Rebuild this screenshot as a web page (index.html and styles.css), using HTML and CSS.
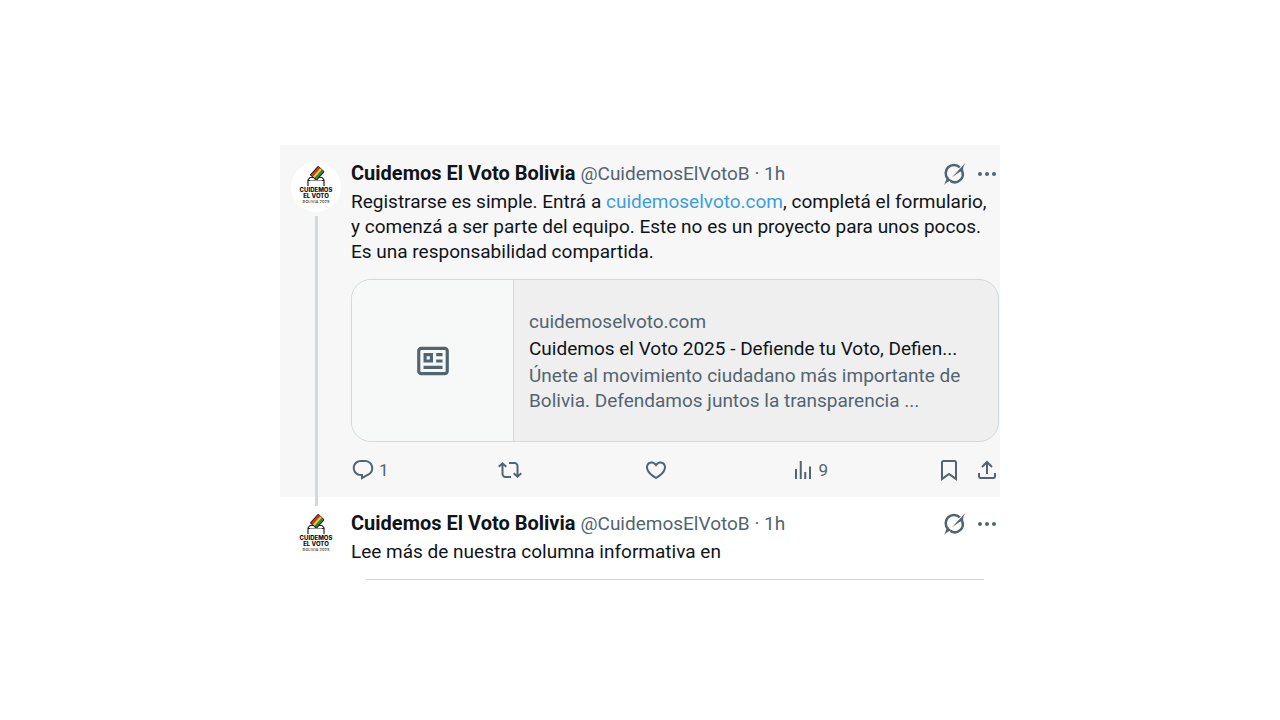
FILE: index.html
```html
<!DOCTYPE html>
<html lang="es">

<head>
    <meta charset="UTF-8">
    <meta name="viewport" content="width=device-width, initial-scale=1.0">
    <title>Cuidemos El Voto Bolivia</title>
    <link rel="stylesheet" href="styles.css">
</head>

<body>

    <!-- shared icons -->
    <svg class="sprite" aria-hidden="true">
        <symbol id="logo" viewBox="0 0 50 50">
            <circle cx="25" cy="25" r="25" fill="#fff"/>
            <path d="M17 24V18L19 15.500H31L33 18V24M17 18.500H33" fill="none" stroke="#222" stroke-width="1.200"/>
            <g transform="rotate(-48 26 11.500)">
                <rect x="20" y="7" width="12.500" height="9" rx="1" fill="#1d1d1b"/>
                <rect x="21" y="8" width="11" height="2.400" fill="#d8352a"/>
                <rect x="21" y="10.400" width="11" height="2.400" fill="#f5c928"/>
                <rect x="21" y="12.800" width="11" height="2.200" fill="#31863c"/>
            </g>
            <path d="M19 19H31" stroke="#fff" stroke-width="1"/>
        </symbol>
        <symbol id="grok" viewBox="0 0 24 24">
            <path d="M5 16.900A8 8 0 0 1 16.800 5.400M18.900 8.600A8 8 0 0 1 7.400 18.900" fill="none" stroke="currentColor" stroke-width="2.500"/>
            <path d="M22.500 .8L9 15.200L16.600 9.900L20.200 8.600C19.600 5.600 21 3.600 22.500 .8zM1.200 22.900L4.200 14.900L9.200 18.700C5.700 18.600 3.500 20.600 1.200 22.900z"/>
        </symbol>
        <symbol id="more" viewBox="0 0 24 24">
            <path d="M3 12c0-1.100.9-2 2-2s2 .9 2 2-.9 2-2 2-2-.9-2-2zm9 2c1.100 0 2-.9 2-2s-.9-2-2-2-2 .9-2 2 .9 2 2 2zm7 0c1.100 0 2-.9 2-2s-.9-2-2-2-2 .9-2 2 .9 2 2 2z"/>
        </symbol>
        <symbol id="news" viewBox="0 0 24 24">
            <path d="M1.998 5.500c0-1.380 1.119-2.500 2.500-2.500h15c1.381 0 2.500 1.120 2.500 2.500v13c0 1.380-1.119 2.500-2.500 2.500h-15c-1.381 0-2.500-1.120-2.500-2.500v-13zm2.500-.5c-.276 0-.5.22-.5.5v13c0 .28.224.5.5.5h15c.276 0 .5-.22.5-.5v-13c0-.28-.224-.5-.5-.5h-15zM6 7h6v6H6V7zm2 2v2h2V9H8zm10 0h-4V7h4v2zm-4 4h4v-2h-4v2zm-8 4v-2h12v2H6z"/>
        </symbol>
        <symbol id="reply" viewBox="0 0 24 24">
            <path d="M1.751 10c0-4.420 3.584-8 8.005-8h4.366c4.490 0 8.129 3.640 8.129 8.130 0 2.960-1.607 5.680-4.196 7.110l-8.054 4.460v-3.690h-.067c-4.490.1-8.183-3.510-8.183-8.010zm8.005-6c-3.317 0-6.005 2.690-6.005 6 0 3.370 2.770 6.080 6.138 6.010l.351-.01h1.761v2.300l5.087-2.810c1.951-1.080 3.163-3.130 3.163-5.360 0-3.390-2.744-6.130-6.129-6.130H9.756z"/>
        </symbol>
        <symbol id="repost" viewBox="0 0 24 24">
            <path d="M4.500 3.880l4.432 4.140-1.364 1.460L5.500 7.550V16c0 1.100.896 2 2 2H13v2H7.500c-2.209 0-4-1.790-4-4V7.550L1.432 9.480.068 8.020 4.500 3.880zM16.500 6H11V4h5.500c2.209 0 4 1.790 4 4v8.450l2.068-1.930 1.364 1.460-4.432 4.140-4.432-4.140 1.364-1.460 2.068 1.930V8c0-1.100-.896-2-2-2z"/>
        </symbol>
        <symbol id="like" viewBox="0 0 24 24">
            <path d="M16.697 5.500c-1.222-.06-2.679.51-3.890 2.160l-.805 1.090-.806-1.090C9.984 6.010 8.526 5.440 7.304 5.500c-1.243.07-2.349.78-2.910 1.910-.552 1.120-.633 2.780.479 4.820 1.074 1.970 3.257 4.270 7.129 6.610 3.870-2.340 6.052-4.640 7.126-6.610 1.111-2.040 1.030-3.700.477-4.820-.561-1.130-1.666-1.840-2.908-1.910zm4.187 7.690c-1.351 2.480-4.001 5.120-8.379 7.670l-.503.3-.504-.3c-4.379-2.550-7.029-5.190-8.382-7.670-1.360-2.500-1.410-4.860-.514-6.670.887-1.790 2.647-2.910 4.601-3.010 1.651-.09 3.368.56 4.798 2.010 1.429-1.450 3.146-2.100 4.796-2.010 1.954.1 3.714 1.220 4.601 3.010.896 1.810.846 4.170-.514 6.670z"/>
        </symbol>
        <symbol id="views" viewBox="0 0 24 24">
            <path d="M8.750 21V3h2v18h-2zM18 21V8.500h2V21h-2zM4 21l.004-10h2L6 21H4zm9.248 0v-7h2v7h-2z"/>
        </symbol>
        <symbol id="bookmark" viewBox="0 0 24 24">
            <path d="M4 4.500C4 3.120 5.119 2 6.500 2h11C18.881 2 20 3.120 20 4.500v18.440l-8-5.710-8 5.710V4.500zM6.500 4c-.276 0-.5.22-.5.5v14.560l6-4.290 6 4.290V4.500c0-.28-.224-.5-.5-.5h-11z"/>
        </symbol>
        <symbol id="share" viewBox="0 0 24 24">
            <path d="M12 2.590l5.700 5.700-1.410 1.420L13 6.410V16h-2V6.410l-3.300 3.300-1.410-1.420L12 2.590zM21 15l-.02 3.510c0 1.380-1.120 2.490-2.500 2.490H5.500C4.110 21 3 19.880 3 18.500V15h2v3.500c0 .28.22.5.5.5h12.980c.28 0 .5-.22.5-.5L19 15h2z"/>
        </symbol>
    </svg>

    <main class="thread">
        <article class="post active">
            <div class="side">
                <svg class="avatar" viewBox="0 0 50 50">
                    <use href="#logo"/>
                    <text class="logo-text" x="25" y="30">CUIDEMOS</text>
                    <text class="logo-text" x="25" y="36">EL VOTO</text>
                    <text class="logo-small" x="25" y="41">BOLIVIA 2025</text>
                </svg>
                <div class="line"></div>
            </div>
            <div class="content">
                <header class="post-header">
                    <strong class="name">Cuidemos El Voto Bolivia</strong>
                    <span class="handle">@CuidemosElVotoB · 1h</span>
                    <div class="tools">
                        <button aria-label="Grok"><svg class="icon"><use href="#grok"/></svg></button>
                        <button aria-label="Más opciones"><svg class="icon"><use href="#more"/></svg></button>
                    </div>
                </header>
                <p class="text">Registrarse es simple. Entrá a <a href="#">cuidemoselvoto.com</a>, completá el formulario, y comenzá a ser parte del equipo. Este no es un proyecto para unos pocos. Es una responsabilidad compartida.</p>
                <a class="card" href="#">
                    <div class="card-media"><svg class="news"><use href="#news"/></svg></div>
                    <div class="card-body">
                        <div class="card-domain">cuidemoselvoto.com</div>
                        <div class="card-title">Cuidemos el Voto 2025 - Defiende tu Voto, Defien...</div>
                        <div class="card-desc">Únete al movimiento ciudadano más importante de Bolivia. Defendamos juntos la transparencia ...</div>
                    </div>
                </a>
                <div class="actions">
                    <button aria-label="Responder"><svg class="icon"><use href="#reply"/></svg><span>1</span></button>
                    <button aria-label="Repostear"><svg class="icon"><use href="#repost"/></svg></button>
                    <button aria-label="Me gusta"><svg class="icon"><use href="#like"/></svg></button>
                    <button aria-label="Vistas"><svg class="icon"><use href="#views"/></svg><span>9</span></button>
                    <div class="save">
                        <button aria-label="Guardar"><svg class="icon"><use href="#bookmark"/></svg></button>
                        <button aria-label="Compartir"><svg class="icon"><use href="#share"/></svg></button>
                    </div>
                </div>
            </div>
        </article>

        <article class="post last">
            <div class="side">
                <div class="line-end"></div>
                <svg class="avatar" viewBox="0 0 50 50">
                    <use href="#logo"/>
                    <text class="logo-text" x="25" y="30">CUIDEMOS</text>
                    <text class="logo-text" x="25" y="36">EL VOTO</text>
                    <text class="logo-small" x="25" y="41">BOLIVIA 2025</text>
                </svg>
            </div>
            <div class="content">
                <header class="post-header">
                    <strong class="name">Cuidemos El Voto Bolivia</strong>
                    <span class="handle">@CuidemosElVotoB · 1h</span>
                    <div class="tools">
                        <button aria-label="Grok"><svg class="icon"><use href="#grok"/></svg></button>
                        <button aria-label="Más opciones"><svg class="icon"><use href="#more"/></svg></button>
                    </div>
                </header>
                <p class="text">Lee más de nuestra columna informativa en</p>
                <div class="divider"></div>
            </div>
        </article>
    </main>

</body>

</html>
```
FILE: styles.css
```css
* {
    box-sizing: border-box;
}

body {
    margin: 0;
    padding-top: 145px;
    font-family: Roboto, "Liberation Sans", sans-serif;
    font-size: 19px;
    line-height: 25px;
    color: #0f1419;
    background-color: #fff;
}

.sprite {
    display: block;
    width: 0;
    height: 0;
}

.logo-text {
    font-family: Inter, sans-serif;
    font-size: 6px;
    font-weight: 800;
    text-anchor: middle;
    fill: #111;
}

.logo-small {
    font-family: Inter, sans-serif;
    font-size: 4px;
    font-weight: 500;
    text-anchor: middle;
    fill: #333;
}

.thread {
    max-width: 720px;
    margin: 0 auto;
}

.post {
    display: flex;
    gap: 10px;
    padding: 0 1px 0 11px;
}

.post.active {
    background-color: #f7f7f7;
}

.side {
    flex: none;
    width: 50px;
    display: flex;
    flex-direction: column;
    align-items: center;
    gap: 4px;
}

.active .side {
    padding-top: 17px;
}

.avatar {
    flex: none;
    width: 50px;
    height: 50px;
}

.line,
.line-end {
    width: 3px;
    background-color: #cfd9de;
}

.line {
    flex: 1;
}

.line-end {
    height: 9px;
}

.content {
    flex: 1;
    min-width: 0;
    padding-top: 16px;
}

.last .content {
    padding-top: 14px;
}

.post-header {
    display: flex;
    gap: 5px;
    height: 25px;
    white-space: nowrap;
}

.name {
    font-size: 20px;
    font-weight: 700;
}

.handle,
.card-domain,
.card-desc {
    color: #536471;
}

.tools {
    display: flex;
    gap: 8px;
    margin-left: auto;
}

button {
    display: flex;
    align-items: center;
    gap: 4px;
    padding: 0;
    border: none;
    background: none;
    color: #536471;
    font-family: inherit;
    font-size: 17px;
    cursor: pointer;
}

.icon {
    width: 24px;
    height: 24px;
    fill: currentColor;
}

.text {
    margin: 3px 0 0;
}

.text a {
    color: #3b9fdf;
    text-decoration: none;
}

.card {
    display: flex;
    min-height: 163px;
    margin-top: 15px;
    border: 1px solid #cfd9de;
    border-radius: 20px;
    overflow: hidden;
    color: inherit;
    text-decoration: none;
    background-color: #efefef;
}

.card-media {
    flex: none;
    width: 162px;
    display: flex;
    align-items: center;
    justify-content: center;
    border-right: 1px solid #cfd9de;
    background-color: #f7f9f9;
}

.news {
    width: 38px;
    height: 38px;
    fill: #536471;
}

.card-body {
    flex: 1;
    min-width: 0;
    display: flex;
    flex-direction: column;
    justify-content: center;
    gap: 2px;
    padding: 0 15px;
}

.card-title {
    overflow: hidden;
    white-space: nowrap;
}

.actions {
    display: grid;
    grid-template-columns: repeat(4, 1fr) auto;
    align-items: center;
    height: 30px;
    margin: 13px 0 12px;
}

.save {
    display: flex;
    gap: 14px;
}

.divider {
    height: 1px;
    margin: 15px 15px 0;
    background-color: #d5d9db;
}
```
